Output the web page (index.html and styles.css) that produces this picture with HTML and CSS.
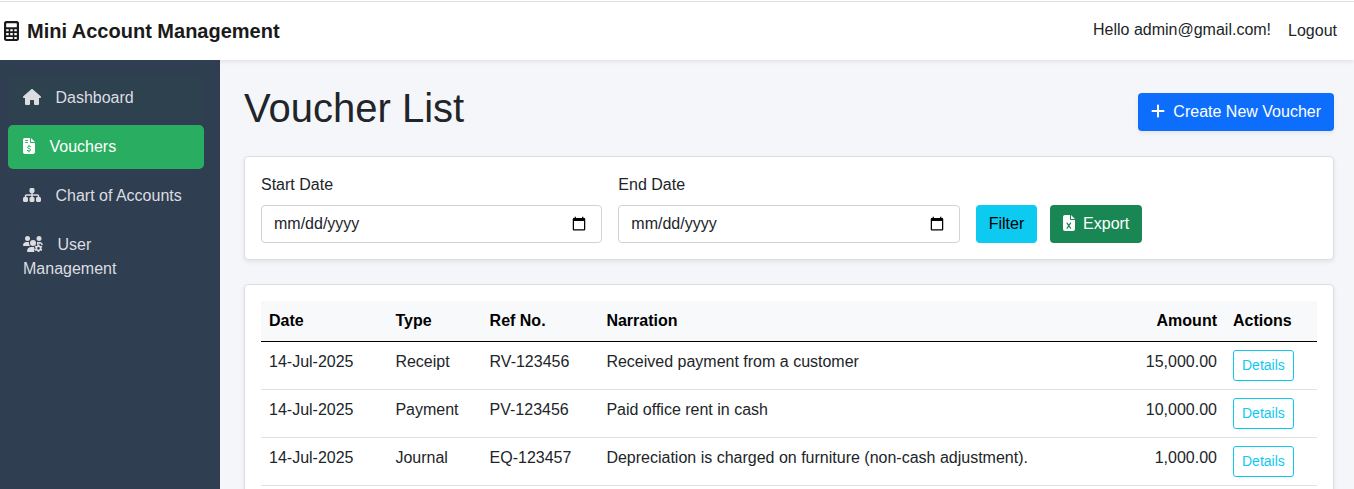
FILE: index.html
```html
<!DOCTYPE html>
<html lang="en">
<head>
<meta charset="utf-8">
<title>Voucher List</title>
<link rel="stylesheet" href="styles.css">
</head>
<body>
<header class="topbar">
  <div class="brand">
    <svg class="brand-icon" viewBox="0 0 384 512"><path fill-rule="evenodd" d="M56 0C24 0 0 24 0 56V456c0 32 24 56 56 56H328c32 0 56-24 56-56V56c0-32-24-56-56-56zM72 56H312c10 0 16 6 16 16v72c0 10-6 16-16 16H72c-10 0-16-6-16-16V72c0-10 6-16 16-16zM56 208h64v56H56zM160 208h64v56h-64zM264 208h64v56h-64zM56 308h64v56H56zM160 308h64v56h-64zM264 308h64v56h-64zM56 408H224v52H56zM264 408h64v52h-64z"/></svg>
    <span>Mini Account Management</span>
  </div>
  <div class="account">
    <span class="hello">Hello admin@gmail.com!</span>
    <a class="logout">Logout</a>
  </div>
</header>
<div class="layout">
  <nav class="sidebar">
    <a class="side-link hovered"><svg class="icon w-18" viewBox="0 0 576 512"><path d="M575.800 255.500c0 18-15 32.100-32 32.100h-32l.7 160.200c0 2.700-.2 5.400-.5 8.100V472c0 22.100-17.900 40-40 40H392c-22.100 0-40-17.900-40-40V384c0-17.700-14.300-32-32-32H256c-17.700 0-32 14.300-32 32v88c0 22.100-17.900 40-40 40H104c-22.100 0-40-17.900-40-40V287.600H32c-18 0-32-14-32-32.100c0-9 3-17 10-24L266.400 8c7-7 15-8 22-8s15 2 21 7L564.800 231.500c8 7 12 15 11 24z"/></svg> Dashboard</a>
    <a class="side-link active"><svg class="icon w-12" viewBox="0 0 384 512"><path fill-rule="evenodd" d="M64 0C28.700 0 0 28.700 0 64V448c0 35.300 28.700 64 64 64H320c35.300 0 64-28.700 64-64V160H256c-17.700 0-32-14.300-32-32V0zM256 0V128H384zM64 80c0-8.800 7.200-16 16-16h64a16 16 0 0 1 0 32H80c-8.800 0-16-7.200-16-16zM64 144c0-8.800 7.200-16 16-16h64a16 16 0 0 1 0 32H80c-8.800 0-16-7.200-16-16z"/><path class="cutout" d="M240 278c-12-8-29-13-47-13c-29 0-49 13-49 35c0 50 100 24 100 76c0 24-22 38-51 38c-22 0-41-6-55-15M192 232V265M192 414V448"/></svg> Vouchers</a>
    <a class="side-link"><svg class="icon w-18" viewBox="0 0 576 512"><path d="M208 80c0-26.500 21.500-48 48-48h64c26.500 0 48 21.500 48 48v64c0 26.500-21.500 48-48 48h-8v40H464c30.900 0 56 25.100 56 56v32h8c26.500 0 48 21.500 48 48v64c0 26.500-21.500 48-48 48H464c-26.500 0-48-21.500-48-48V368c0-26.500 21.500-48 48-48h8V288c0-4.400-3.600-8-8-8H312v40h8c26.500 0 48 21.500 48 48v64c0 26.500-21.500 48-48 48H256c-26.500 0-48-21.500-48-48V368c0-26.500 21.500-48 48-48h8V280H112c-4.400 0-8 3.600-8 8v32h8c26.500 0 48 21.500 48 48v64c0 26.500-21.500 48-48 48H48c-26.500 0-48-21.500-48-48V368c0-26.500 21.500-48 48-48h8V288c0-30.900 25.100-56 56-56H264V192h-8c-26.500 0-48-21.500-48-48z"/></svg> Chart of Accounts</a>
    <a class="side-link"><svg class="icon w-20" viewBox="0 0 640 512"><path d="M144 160A80 80 0 1 0 144 0a80 80 0 1 0 0 160zM512 160A80 80 0 1 0 512 0a80 80 0 1 0 0 160zM0 298.700C0 310.400 9.600 320 21.300 320H235.300c-26.600-23.500-43.300-57.800-43.300-96c0-7.600.7-15 1.900-22.300c-13.600-6.300-28.700-9.700-44.600-9.700h-42.700C47.800 192 0 239.800 0 298.700zM320 320a96 96 0 1 0 0-192a96 96 0 1 0 0 192zM446 202c14-7 29-10 45-10h43c59 0 106 45 106 103l-24-16-28 12-16-43h-88l-16 40-24-10c3-17 4-34 2-54zM261.300 352H362l-15 35 28 22-2 38-24 23 22 42H154.700c-14.700 0-26.700-11.900-26.700-26.700C128 411.700 187.700 352 261.300 352z"/><path fill-rule="evenodd" d="M472 264h48l9 40 24 13 39-11 26 44-28 27v30l28 27-26 44-39-11-24 13-9 32h-48l-9-32-24-13-39 11-26-44 28-27v-30l-28-27 26-44 39 11 24-13zM496 350a44 44 0 1 0 0 88 44 44 0 1 0 0-88z"/></svg> User Management</a>
  </nav>
  <main class="content">
    <div class="page-head">
      <h1>Voucher List</h1>
      <a class="btn btn-primary"><svg class="icon w-14" viewBox="0 0 448 512"><path d="M256 80c0-17.700-14.300-32-32-32s-32 14.300-32 32V224H48c-17.700 0-32 14.300-32 32s14.300 32 32 32H192V432c0 17.700 14.300 32 32 32s32-14.300 32-32V288H400c17.700 0 32-14.300 32-32s-14.300-32-32-32H256z"/></svg> Create New Voucher</a>
    </div>
    <section class="card filters">
      <div class="field"><label for="start">Start Date</label><input id="start" type="date"></div>
      <div class="field"><label for="end">End Date</label><input id="end" type="date"></div>
      <div class="actions">
        <button class="btn btn-info">Filter</button>
        <button class="btn btn-success"><svg class="icon w-12" viewBox="0 0 384 512"><path d="M64 0C28.700 0 0 28.700 0 64V448c0 35.300 28.700 64 64 64H320c35.300 0 64-28.700 64-64V160H256c-17.700 0-32-14.300-32-32V0zM256 0V128H384z"/><path class="cutout" d="M130 258L242 424M242 258L130 424"/></svg> Export</button>
      </div>
    </section>
    <section class="card">
      <table class="vouchers">
        <colgroup><col class="c-date"><col class="c-type"><col class="c-ref"><col><col class="c-amount"><col class="c-actions"></colgroup>
        <thead><tr><th>Date</th><th>Type</th><th>Ref No.</th><th>Narration</th><th class="num">Amount</th><th>Actions</th></tr></thead>
        <tbody>
          <tr><td>14-Jul-2025</td><td>Receipt</td><td>RV-123456</td><td>Received payment from a customer</td><td class="num">15,000.00</td><td><a class="btn-details">Details</a></td></tr>
          <tr><td>14-Jul-2025</td><td>Payment</td><td>PV-123456</td><td>Paid office rent in cash</td><td class="num">10,000.00</td><td><a class="btn-details">Details</a></td></tr>
          <tr><td>14-Jul-2025</td><td>Journal</td><td>EQ-123457</td><td>Depreciation is charged on furniture (non-cash adjustment).</td><td class="num">1,000.00</td><td><a class="btn-details">Details</a></td></tr>
        </tbody>
      </table>
    </section>
  </main>
</div>
</body>
</html>
```

FILE: styles.css
```css
*, *::before, *::after { box-sizing: border-box; }

html, body { height: 100%; }

body {
  margin: 0;
  display: flex;
  flex-direction: column;
  overflow: hidden;
  background: #f5f6fa;
  color: #212529;
  font: 16px/24px "Liberation Sans", Arial, sans-serif;
}

.topbar {
  flex: none;
  display: flex;
  align-items: center;
  justify-content: space-between;
  height: 59px;
  margin-top: 1px;
  padding: 0 17px 0 4px;
  background: #fff;
  border-top: 1px solid #dee2e6;
  box-shadow: 0 2px 4px rgba(0, 0, 0, .075), 0 -1px 0 #fff;
}

.brand {
  display: flex;
  align-items: center;
  gap: 8px;
  color: #1a1a1a;
  font-size: 20px;
  font-weight: 700;
}
.brand-icon { width: 15px; height: 20px; fill: currentColor; }

.account { display: flex; gap: 17px; }
.hello { padding-bottom: 2px; }
.logout { padding-top: 1px; }

.layout { flex: 1; display: flex; min-height: 0; }

.sidebar {
  position: relative;
  flex: none;
  width: 220px;
  padding: 16px 16px 0 8px;
  background: #2f3e50;
}

.side-link {
  display: block;
  margin-bottom: 5px;
  padding: 10px 15px;
  border-radius: 5px;
  color: #dcdde1;
}
.side-link .icon { margin-right: 10px; }
.hovered { background: #2e414f; }
.active { background: #29ae61; color: #fff; }

.icon {
  display: inline-block;
  height: 16px;
  fill: currentColor;
  vertical-align: -2px;
}
.w-12 { width: 12px; }
.w-14 { width: 14px; }
.w-18 { width: 18px; }
.w-20 { width: 20px; }
.cutout { fill: none; stroke: #29ae61; stroke-width: 32; stroke-linecap: round; }

.content { flex: 1; min-width: 0; padding: 24px 20px 0 24px; }

.page-head {
  display: flex;
  align-items: center;
  justify-content: space-between;
  margin-bottom: 16px;
}
h1 { margin: 0 0 8px; font-size: 40px; line-height: 48px; font-weight: 400; }

.btn {
  display: inline-block;
  padding: 6px 12px;
  border: 1px solid transparent;
  border-radius: 4px;
  font: inherit;
  white-space: nowrap;
}
.btn .icon { margin-right: 4px; }
.btn-primary { background: #0d6efd; color: #fff; box-shadow: 0 2px 4px rgba(0, 0, 0, .075); }
.btn-info { background: #0dcaf0; color: #000; }
.btn-success { background: #198754; color: #fff; }
.btn-success .cutout { stroke: #198754; stroke-width: 40; }

.card {
  margin-bottom: 24px;
  padding: 16px;
  background: #fff;
  border: 1px solid #dcdde0;
  border-radius: 4px;
  box-shadow: 0 2px 4px rgba(0, 0, 0, .075);
}

.filters {
  display: grid;
  grid-template-columns: repeat(3, 1fr);
  gap: 16px;
  align-items: end;
}
.field { display: grid; gap: 8px; }
.field input {
  width: 100%;
  height: 38px;
  padding: 6px 12px;
  border: 1px solid #ced4da;
  border-radius: 4px;
  background: #fff;
  color: #212529;
  font: inherit;
}
.field input::-webkit-datetime-edit-month-field,
.field input::-webkit-datetime-edit-day-field,
.field input::-webkit-datetime-edit-year-field { padding: 0; }
.actions { display: flex; gap: 12.4px; }

.vouchers { width: 100%; border-collapse: separate; border-spacing: 0; table-layout: fixed; }
.vouchers th, .vouchers td {
  padding: 8px;
  text-align: left;
  vertical-align: top;
  border-bottom: 1px solid #dee2e6;
}
.vouchers th { background: #f8f9fa; color: #000; border-bottom-color: #000; }
.vouchers .num { text-align: right; }
.c-date { width: 126.4px; }
.c-type { width: 94.2px; }
.c-ref { width: 116.800px; }
.c-amount { width: 110px; }
.c-actions { width: 92px; }

.btn-details {
  display: block;
  width: fit-content;
  padding: 4px 8px;
  border: 1px solid #0dcaf0;
  border-radius: 3px;
  color: #0dcaf0;
  font-size: 14px;
  line-height: 21px;
}
```
